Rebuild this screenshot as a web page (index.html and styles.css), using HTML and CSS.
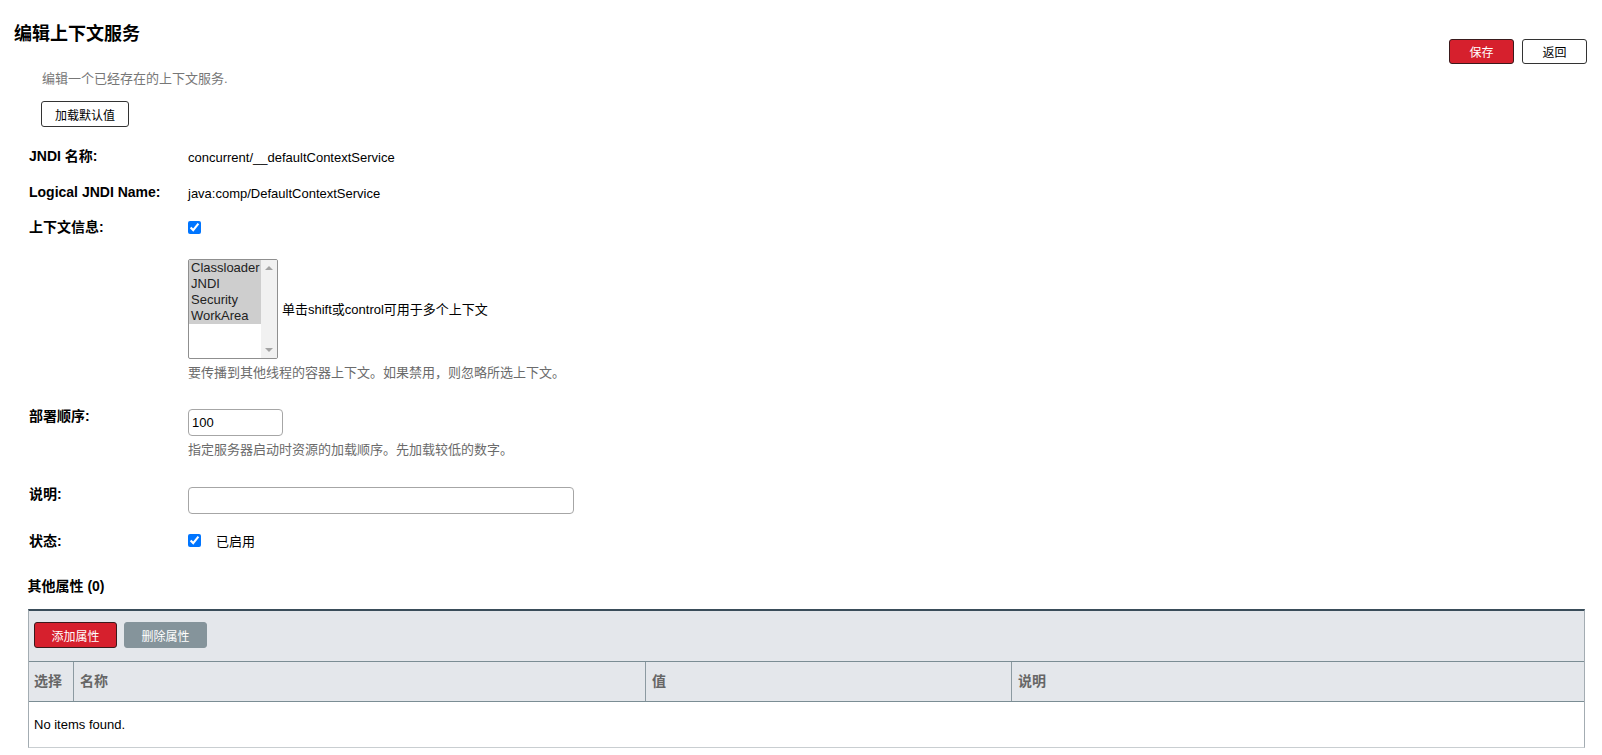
FILE: index.html
```html
<!DOCTYPE html>
<html lang="zh-CN">
<head>
<meta charset="utf-8">
<title>编辑上下文服务</title>
<link rel="stylesheet" href="styles.css">
</head>
<body>
<div class="page">
  <div class="header">
    <div class="intro">
      <h1 class="title">编辑上下文服务</h1>
      <p class="subtitle">编辑一个已经存在的上下文服务.</p>
      <button class="btn btn-outline btn-load">加载默认值</button>
    </div>
    <div class="actions">
      <button class="btn btn-primary btn-top">保存</button>
      <button class="btn btn-outline btn-top">返回</button>
    </div>
  </div>

  <div class="form">
    <div class="row r1">
      <div class="label">JNDI 名称:</div>
      <div class="field"><span class="value">concurrent/__defaultContextService</span></div>
    </div>
    <div class="row r2">
      <div class="label">Logical JNDI Name:</div>
      <div class="field"><span class="value">java:comp/DefaultContextService</span></div>
    </div>
    <div class="row r3">
      <div class="label">上下文信息:</div>
      <div class="field"><input class="check" type="checkbox" checked></div>
    </div>
    <div class="row r4">
      <div class="label"></div>
      <div class="field">
        <div class="listline">
          <div class="listbox">
            <div class="options">
              <div class="option">Classloader</div>
              <div class="option">JNDI</div>
              <div class="option">Security</div>
              <div class="option">WorkArea</div>
            </div>
            <div class="scrollbar">
              <span class="arrow up"></span>
              <span class="arrow down"></span>
            </div>
          </div>
          <span class="hint">单击shift或control可用于多个上下文</span>
        </div>
        <div class="help help1">要传播到其他线程的容器上下文。如果禁用，则忽略所选上下文。</div>
      </div>
    </div>
    <div class="row r5">
      <div class="label">部署顺序:</div>
      <div class="field">
        <input class="text-input short" type="text" value="100">
        <div class="help help2">指定服务器启动时资源的加载顺序。先加载较低的数字。</div>
      </div>
    </div>
    <div class="row r6">
      <div class="label">说明:</div>
      <div class="field">
        <input class="text-input long" type="text" value="">
      </div>
    </div>
    <div class="row r7">
      <div class="label">状态:</div>
      <div class="field status">
        <input class="check" type="checkbox" checked>
        <span class="value">已启用</span>
      </div>
    </div>
  </div>

  <div class="section-title">其他属性 (0)</div>

  <div class="ptable">
    <div class="toolbar">
      <button class="btn btn-primary btn-tool">添加属性</button>
      <button class="btn btn-disabled btn-tool">删除属性</button>
    </div>
    <div class="thead">
      <div class="th">选择</div>
      <div class="th">名称</div>
      <div class="th">值</div>
      <div class="th">说明</div>
    </div>
    <div class="tbody">No items found.</div>
  </div>
</div>
</body>
</html>
```

FILE: styles.css
```css
* { box-sizing: border-box; }

body {
  margin: 0;
  font-family: "Liberation Sans", Arial, "Noto Sans CJK SC", sans-serif;
  color: #000;
  background: #fff;
}

.page {
  padding: 0 15px 0 14px;
}

.header {
  display: flex;
  justify-content: space-between;
  align-items: flex-start;
}

.title {
  margin: 23px 0 0;
  font-size: 18px;
  line-height: 22px;
  font-weight: bold;
}

.subtitle {
  margin: 26px 0 0 28px;
  font-size: 13px;
  line-height: 16px;
  color: #777;
}

.btn {
  font-family: "Liberation Sans", Arial, "Noto Sans CJK SC", sans-serif;
  font-size: 12px;
  border-radius: 3px;
  padding: 0;
  cursor: pointer;
}

.btn-outline {
  background: #fff;
  color: #000;
  border: 1px solid #333;
}

.btn-primary {
  background: #d6202d;
  color: #fff;
  border: 1px solid #3a1a1c;
}

.btn-disabled {
  background: #85949b;
  color: #fff;
  border: 1px solid #85949b;
}

.btn-load {
  display: block;
  margin: 14px 0 0 27px;
  width: 88px;
  height: 26px;
}

.actions {
  display: flex;
  gap: 8px;
  margin-top: 39px;
}

.btn-top {
  width: 65px;
  height: 25px;
}

/* form */
.form {
  margin-left: 15px;
  padding-top: 21px;
}

.row {
  display: grid;
  grid-template-columns: 159px 1fr;
  align-items: start;
}

.label {
  font-size: 14px;
  line-height: 17px;
  font-weight: bold;
}

.value {
  font-size: 13px;
  line-height: 17px;
}

.r2 { margin-top: 17.5px; }
.r3 { margin-top: 17.5px; }
.r4 { margin-top: 23px; }
.r5 { margin-top: 27px; }
.r6 { margin-top: 27.5px; }
.r7 { margin-top: 19.5px; }

.check {
  display: block;
  width: 13px;
  height: 13px;
  margin: 2px 0 0;
  accent-color: #0075ff;
}

.r7 .check { margin-top: 1px; }

.status {
  display: flex;
  align-items: flex-start;
  gap: 15px;
}

.listline {
  display: flex;
  align-items: center;
  gap: 4px;
}

.listbox {
  width: 90px;
  height: 100px;
  border: 1px solid #8f8f8f;
  border-radius: 2px;
  display: flex;
  overflow: hidden;
  background: #fff;
}

.options {
  flex: 1;
  min-width: 0;
}

.option {
  background: #cecece;
  color: #222;
  font-size: 13px;
  line-height: 16px;
  padding-left: 2px;
  white-space: nowrap;
  overflow: hidden;
}

.scrollbar {
  width: 16px;
  background: #f1f1f1;
  position: relative;
}

.arrow {
  position: absolute;
  left: 4px;
  width: 0;
  height: 0;
  border-left: 4px solid transparent;
  border-right: 4px solid transparent;
}

.arrow.up {
  top: 6px;
  border-bottom: 4px solid #a3a3a3;
}

.arrow.down {
  bottom: 6px;
  border-top: 4px solid #a3a3a3;
}

.hint {
  font-size: 13px;
  line-height: 17px;
}

.help {
  font-size: 13px;
  line-height: 16px;
  color: #6b6b6b;
}

.help1 { margin-top: 6px; }
.help2 { margin-top: 6px; }

.text-input {
  display: block;
  height: 27px;
  margin-top: 1px;
  border: 1px solid #a6a6a6;
  border-radius: 4px;
  padding: 0 3px;
  font-family: "Liberation Sans", Arial, sans-serif;
  font-size: 13px;
  color: #000;
  background: #fff;
}

.text-input.short { width: 95px; }
.text-input.long { width: 386px; }

/* properties */
.section-title {
  margin: 27.5px 0 0 13.5px;
  font-size: 14px;
  line-height: 17px;
  font-weight: bold;
}

.ptable {
  margin: 14.5px 2px 0 13.5px;
  border-top: 2px solid #3a4d5a;
  border-left: 1px solid #a3acb2;
  border-right: 1px solid #a3acb2;
  border-bottom: 1px solid #c9ced1;
}

.toolbar {
  background: #e4e7eb;
  height: 50px;
  padding: 11px 6px 0 5.5px;
  display: flex;
  gap: 7px;
  align-items: flex-start;
}

.btn-tool {
  width: 83px;
  height: 26px;
}

.thead {
  display: grid;
  grid-template-columns: 44.5px 572px 366px 1fr;
  background: #e4e7eb;
  border-top: 1px solid #7b8d94;
  border-bottom: 1px solid #7b8d94;
  height: 41px;
}

.th {
  font-size: 14px;
  font-weight: bold;
  color: #666;
  line-height: 39px;
  padding-left: 6px;
}

.th:first-child { padding-left: 5.5px; }

.th + .th {
  border-left: 1px solid #8c9aa1;
}

.tbody {
  height: 45px;
  line-height: 45px;
  font-size: 13px;
  padding-left: 5.5px;
}
```
